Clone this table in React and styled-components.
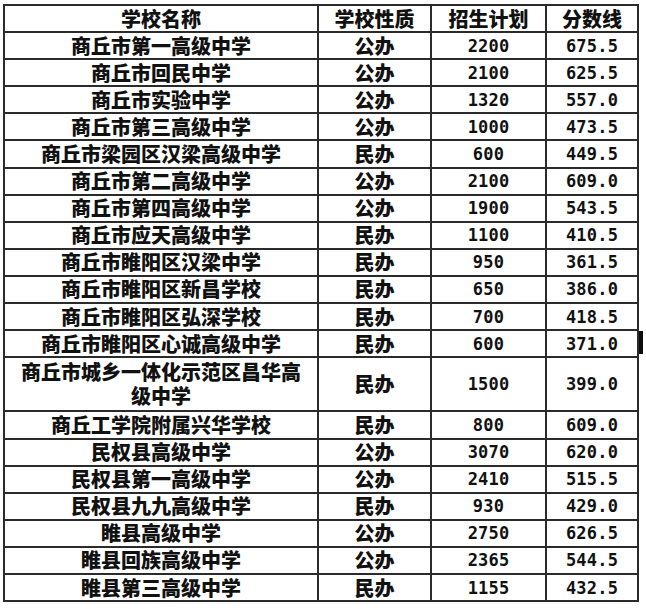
import React from "react";
import styled, { createGlobalStyle } from "styled-components";

const rows = [
  ["商丘市第一高级中学", "公办", "2200", "675.5"],
  ["商丘市回民中学", "公办", "2100", "625.5"],
  ["商丘市实验中学", "公办", "1320", "557.0"],
  ["商丘市第三高级中学", "公办", "1000", "473.5"],
  ["商丘市梁园区汉梁高级中学", "民办", "600", "449.5"],
  ["商丘市第二高级中学", "公办", "2100", "609.0"],
  ["商丘市第四高级中学", "公办", "1900", "543.5"],
  ["商丘市应天高级中学", "民办", "1100", "410.5"],
  ["商丘市睢阳区汉梁中学", "民办", "950", "361.5"],
  ["商丘市睢阳区新昌学校", "民办", "650", "386.0"],
  ["商丘市睢阳区弘深学校", "民办", "700", "418.5"],
  ["商丘市睢阳区心诚高级中学", "民办", "600", "371.0", "mark"],
  ["商丘市城乡一体化示范区昌华高级中学", "民办", "1500", "399.0", "tall"],
  ["商丘工学院附属兴华学校", "民办", "800", "609.0"],
  ["民权县高级中学", "公办", "3070", "620.0"],
  ["民权县第一高级中学", "公办", "2410", "515.5"],
  ["民权县九九高级中学", "民办", "930", "429.0"],
  ["睢县高级中学", "公办", "2750", "626.5"],
  ["睢县回族高级中学", "公办", "2365", "544.5"],
  ["睢县第三高级中学", "民办", "1155", "432.5"],
];

const GlobalStyle = createGlobalStyle`
  html, body {
    margin: 0;
    background: #ffffff;
  }
  body {
    font-family: "Noto Sans CJK SC", "DejaVu Sans", sans-serif;
    color: #111111;
  }
`;

const Page = styled.div`
  padding: 4px 0 0 3px;
  width: 646px;
  height: 609px;
  box-sizing: border-box;
`;

const Table = styled.table`
  border-collapse: collapse;
  table-layout: fixed;
  width: 634px;
`;

const Row = styled.tr`
  height: ${(p) => (p.$tall ? "54.2px" : "27.1px")};
`;

const HeadCell = styled.th`
  border: 2px solid #2b2b2b;
  padding: 0;
  font-size: 20px;
  font-weight: 900;
  line-height: 22px;
  text-align: center;
`;

const NameCell = styled.td`
  border: 2px solid #2b2b2b;
  padding: 0 8px;
  font-size: 20px;
  font-weight: 900;
  line-height: 24px;
  text-align: center;
  word-break: break-all;
`;

const TypeCell = styled(NameCell)`
  padding: 0;
`;

const NumCell = styled.td`
  position: relative;
  border: 2px solid #2b2b2b;
  padding: 0;
  font-family: "DejaVu Sans Mono", "Liberation Mono", monospace;
  font-size: 17px;
  font-weight: 700;
  text-align: center;
  letter-spacing: 0.2px;

  ${(p) =>
    p.$mark &&
    `
    &::after {
      content: "";
      position: absolute;
      right: -6px;
      top: 0;
      bottom: 2px;
      width: 4px;
      background: #0d0d0d;
    }
  `}
`;

export default function App() {
  return (
    <>
      <GlobalStyle />
      <Page>
        <Table>
          <colgroup>
            <col style={{ width: 314 }} />
            <col style={{ width: 113 }} />
            <col style={{ width: 115 }} />
            <col style={{ width: 92 }} />
          </colgroup>
          <thead>
            <Row>
              <HeadCell>学校名称</HeadCell>
              <HeadCell>学校性质</HeadCell>
              <HeadCell>招生计划</HeadCell>
              <HeadCell>分数线</HeadCell>
            </Row>
          </thead>
          <tbody>
            {rows.map(([name, type, plan, score, flag]) => (
              <Row key={name} $tall={flag === "tall"}>
                <NameCell>{name}</NameCell>
                <TypeCell>{type}</TypeCell>
                <NumCell>{plan}</NumCell>
                <NumCell $mark={flag === "mark"}>{score}</NumCell>
              </Row>
            ))}
          </tbody>
        </Table>
      </Page>
    </>
  );
}
